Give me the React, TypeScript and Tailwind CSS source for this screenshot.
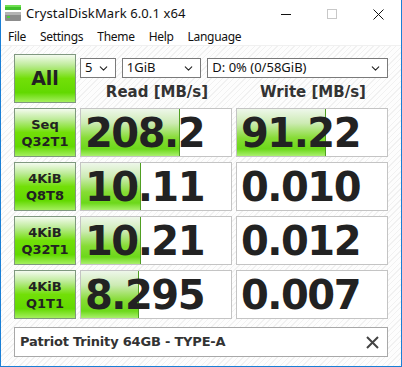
import { ChevronDown } from 'lucide-react';

const rows = [
  { top: 'Seq', bottom: 'Q32T1', read: '208.2', write: '91.22', readBar: 99, writeBar: 89 },
  { top: '4KiB', bottom: 'Q8T8', read: '10.11', write: '0.010', readBar: 60, writeBar: 0 },
  { top: '4KiB', bottom: 'Q32T1', read: '10.21', write: '0.012', readBar: 60, writeBar: 0 },
  { top: '4KiB', bottom: 'Q1T1', read: '8.295', write: '0.007', readBar: 58, writeBar: 0 },
];

const btn =
  'border border-[#7f987f] bg-[linear-gradient(to_bottom,#f4fbef_0%,#bdeb98_22%,#72df08_50%,#62d900_80%,#a4ef5e_100%)] text-[#222] font-bold flex flex-col items-center justify-center leading-[17px]';

function Cell({ value, bar }: { value: string; bar: number }) {
  return (
    <div className="relative h-[49px] border border-[#c4c4c4] bg-white">
      {bar > 0 && (
        <div
          className="absolute left-0 top-0 bottom-0 border-r border-[#4f9e22] bg-[linear-gradient(to_bottom,#eef7ea_0%,#cdebb4_30%,#86dc34_62%,#6cd81a_85%,#aaf06e_100%)]"
          style={{ width: bar }}
        />
      )}
      <div className="relative h-full flex items-center pl-[4px] text-[40px] font-bold text-[#222] tracking-[-1.5px] font-['DejaVu_Sans',sans-serif]">
        {value}
      </div>
    </div>
  );
}

function Select({ w, text }: { w: string; text: string }) {
  return (
    <div className={`${w} h-[20px] border border-[#7a7a7a] bg-white flex items-center justify-between pl-[4px] pr-[5px] text-[13px] text-[#111]`}>
      <span>{text}</span>
      <ChevronDown size={13} strokeWidth={2} className="text-[#222]" />
    </div>
  );
}

export default function App() {
  return (
    <div className="w-[402px] h-[367px] bg-white border-x border-b border-[#1a7fd6] flex flex-col font-['Noto_Sans',sans-serif] overflow-hidden">
      {/* Title bar */}
      <div className="h-[28px] flex items-center shrink-0">
        <svg width="18" height="17" viewBox="0 0 18 17" className="ml-[3px] mt-[-1px]">
          <rect x="1" y="0" width="16" height="5" fill="#3fbf2a" />
          <rect x="1" y="0" width="16" height="2" fill="#6fe052" />
          <rect x="1" y="7" width="16" height="9" rx="1" fill="#8c8c8c" />
          <rect x="1" y="7" width="16" height="3" fill="#b4b4b4" />
          <rect x="3" y="11" width="3" height="2" fill="#4fd13a" />
        </svg>
        <span className="ml-[4px] text-[13px] text-[#111] tracking-[0.1px]">CrystalDiskMark 6.0.1 x64</span>
        <div className="ml-auto flex items-center">
          <div className="w-[46px] flex justify-center">
            <div className="w-[10px] h-px bg-[#111]" />
          </div>
          <div className="w-[46px] flex justify-center">
            <div className="w-[10px] h-[10px] border border-[#c8c8c8]" />
          </div>
          <div className="w-[46px] flex justify-center">
            <svg width="11" height="11" viewBox="0 0 11 11">
              <path d="M0.5 0.5L10.5 10.5M10.5 0.5L0.5 10.5" stroke="#111" strokeWidth="1" />
            </svg>
          </div>
        </div>
      </div>

      {/* Menu */}
      <div className="h-[17px] flex items-center text-[12px] text-[#111] shrink-0 pl-[7px] gap-[14px] tracking-[-0.3px]">
        <span>File</span>
        <span>Settings</span>
        <span>Theme</span>
        <span>Help</span>
        <span>Language</span>
      </div>

      {/* Content */}
      <div className="flex-1 border-t border-[#f0f0f0] bg-[repeating-linear-gradient(135deg,#fdfdfd_0px,#fdfdfd_3px,#f1f1f1_3px,#f1f1f1_4px)] pl-[13px] pr-[13px] pt-[8px]">
        <div className="grid grid-cols-[62px_152px_152px] gap-x-[4px] gap-y-[5px]">
          <div className={`${btn} h-[49px] text-[19px] font-['DejaVu_Sans',sans-serif]`}>All</div>
          <div className="col-span-2 h-[49px] flex flex-col">
            <div className="flex gap-[6px] mt-[4px]">
              <Select w="w-[36px]" text="5" />
              <Select w="w-[80px]" text="1GiB" />
              <Select w="w-[182px]" text="D: 0% (0/58GiB)" />
            </div>
            <div className="flex mt-[4px] text-[15px] font-bold text-[#333] font-['DejaVu_Sans',sans-serif] leading-[20px]">
              <div className="w-[152px] text-center pl-[2px]">Read [MB/s]</div>
              <div className="w-[4px]" />
              <div className="w-[152px] text-center pl-[2px]">Write [MB/s]</div>
            </div>
          </div>

          {rows.map((r, i) => (
            <div key={i} className="contents">
              <div className={`${btn} h-[49px] text-[13px] font-['DejaVu_Sans',sans-serif]`}>
                <span>{r.top}</span>
                <span>{r.bottom}</span>
              </div>
              <Cell value={r.read} bar={r.readBar} />
              <Cell value={r.write} bar={r.writeBar} />
            </div>
          ))}
        </div>

        {/* Drive comment */}
        <div className="mt-[8px] w-[374px] h-[30px] border border-[#a8a8a8] bg-white flex items-center justify-between pl-[5px] pr-[8px]">
          <span className="text-[13px] font-bold text-[#333] tracking-[-0.2px] font-['DejaVu_Sans',sans-serif]">Patriot Trinity 64GB - TYPE-A</span>
          <svg width="13" height="13" viewBox="0 0 13 13">
            <path d="M1 1L12 12M12 1L1 12" stroke="#444" strokeWidth="2" />
          </svg>
        </div>
      </div>
    </div>
  );
}
